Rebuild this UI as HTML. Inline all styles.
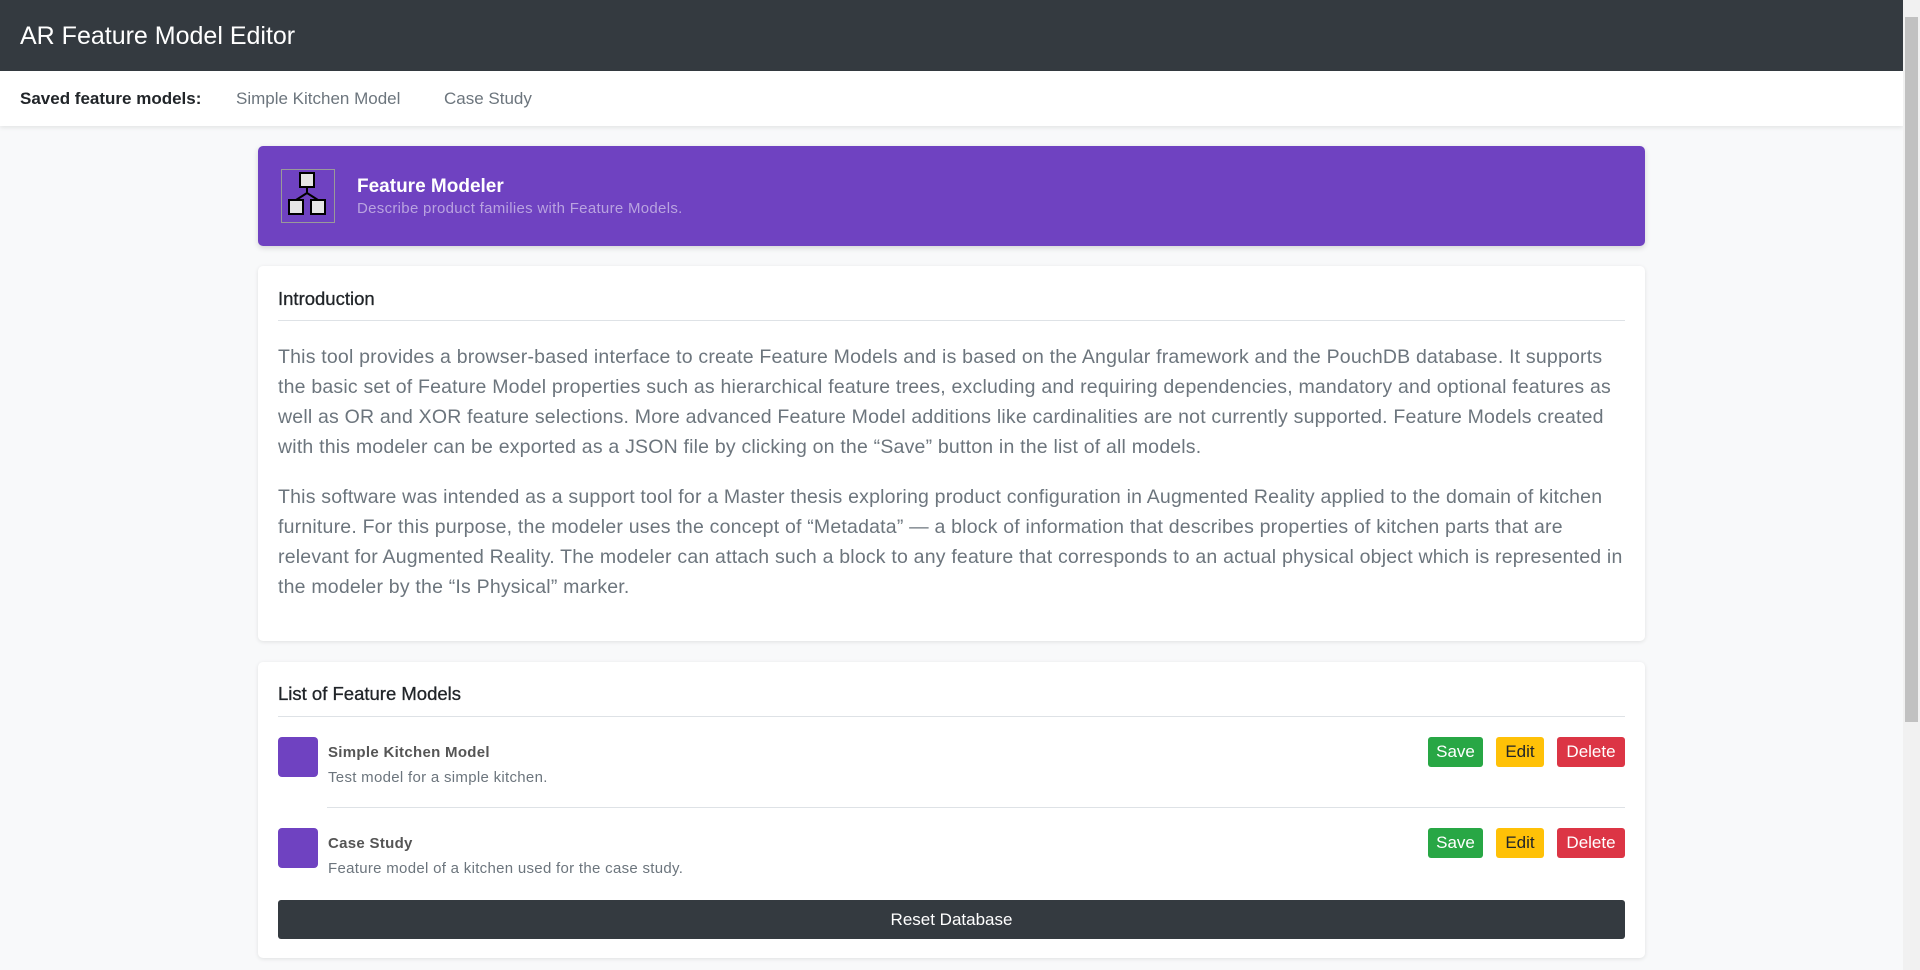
<!DOCTYPE html>
<html><head><meta charset="utf-8"><style>
*{box-sizing:border-box;margin:0;padding:0}
body{width:1920px;height:970px;overflow:hidden;background:#f8f9fa;font-family:"Liberation Sans",sans-serif;color:#212529;position:relative}
.nav{position:absolute;left:0;top:0;width:1903px;height:71px;background:#343a40;color:#fff;font-size:25px;padding:22px 0 0 20px}
.sub{position:absolute;left:0;top:71px;width:1903px;height:55px;background:#fff;box-shadow:0 2px 4px rgba(0,0,0,.08);font-size:17px;color:#6c757d}
.sub span{position:absolute;top:18px}
.sb{position:absolute;left:1903px;top:0;width:17px;height:970px;background:#f1f1f1}
.sb div{position:absolute;left:2px;top:17px;width:13px;height:705px;background:#c1c1c1}
.banner{position:absolute;left:258px;top:146px;width:1387px;height:100px;background:#6f42c1;border-radius:5px;box-shadow:0 2px 6px rgba(0,0,0,.15)}
.card{position:absolute;left:258px;width:1387px;background:#fff;border-radius:5px;box-shadow:0 1px 4px rgba(0,0,0,.1)}
h5{position:absolute;left:20px;font-size:18.5px;font-weight:normal;color:#212529;-webkit-text-stroke:0.3px #212529}
.hr{position:absolute;left:20px;right:20px;height:1px;background:#dee2e6}
p{font-size:19.5px;line-height:30px;color:#6c757d;letter-spacing:0.2px;white-space:nowrap}
.btn{position:absolute;height:30px;border-radius:3px;font-size:17px;line-height:30px;text-align:center;color:#fff}
.sq{position:absolute;left:20px;width:40px;height:40px;background:#6f42c1;border-radius:4px}
.t{position:absolute;left:70px;font-size:15px;font-weight:bold;color:#555;letter-spacing:0.3px}
.d{position:absolute;left:70px;font-size:15px;color:#6c757d;letter-spacing:0.3px}
</style></head><body>
<div class="nav">AR Feature Model Editor</div>
<div class="sub"><span style="left:20px;color:#212529;font-weight:bold">Saved feature models:</span><span style="left:236px">Simple Kitchen Model</span><span style="left:444px">Case Study</span></div>
<div class="sb"><div></div></div>
<div class="banner">
<svg style="position:absolute;left:23px;top:23px" width="54" height="54" viewBox="0 0 54 54"><rect x="0.5" y="0.5" width="53" height="53" fill="none" stroke="#999"/><rect x="19" y="4" width="14" height="14" fill="#e6e6e6" stroke="#000" stroke-width="2"/><path d="M26 18v6M26 24L15 31M26 24L37 31" stroke="#000" stroke-width="2" fill="none"/><rect x="8" y="31" width="14" height="14" fill="#e6e6e6" stroke="#000" stroke-width="2"/><rect x="30" y="31" width="14" height="14" fill="#e6e6e6" stroke="#000" stroke-width="2"/></svg>
<div style="position:absolute;left:99px;top:30px;color:#fff;font-size:19px;font-weight:bold">Feature Modeler</div>
<div style="position:absolute;left:99px;top:54px;color:#b9a3e0;font-size:15px;letter-spacing:0.3px">Describe product families with Feature Models.</div>
</div>
<div class="card" style="top:266px;height:375px">
<h5 style="top:22px">Introduction</h5><div class="hr" style="top:54px"></div>
<div style="position:absolute;left:20px;top:76px;width:1350px">
<p>This tool provides a browser-based interface to create Feature Models and is based on the Angular framework and the PouchDB database. It supports<br>the basic set of Feature Model properties such as hierarchical feature trees, excluding and requiring dependencies, mandatory and optional features as<br>well as OR and XOR feature selections. More advanced Feature Model additions like cardinalities are not currently supported. Feature Models created<br>with this modeler can be exported as a JSON file by clicking on the “Save” button in the list of all models.</p>
<p style="margin-top:20px">This software was intended as a support tool for a Master thesis exploring product configuration in Augmented Reality applied to the domain of kitchen<br>furniture. For this purpose, the modeler uses the concept of “Metadata” — a block of information that describes properties of kitchen parts that are<br>relevant for Augmented Reality. The modeler can attach such a block to any feature that corresponds to an actual physical object which is represented in<br>the modeler by the “Is Physical” marker.</p>
</div></div>
<div class="card" style="top:662px;height:296px">
<h5 style="top:21px">List of Feature Models</h5><div class="hr" style="top:54px"></div>
<div class="sq" style="top:75px"></div><div class="t" style="top:82px">Simple Kitchen Model</div><div class="d" style="top:107px">Test model for a simple kitchen.</div>
<div class="btn" style="left:1170px;top:75px;width:55px;background:#28a745">Save</div>
<div class="btn" style="left:1238px;top:75px;width:48px;background:#ffc107;color:#212529">Edit</div>
<div class="btn" style="left:1299px;top:75px;width:68px;background:#dc3545">Delete</div>
<div class="hr" style="top:145px;left:69px"></div>
<div class="sq" style="top:166px"></div><div class="t" style="top:173px">Case Study</div><div class="d" style="top:198px">Feature model of a kitchen used for the case study.</div>
<div class="btn" style="left:1170px;top:166px;width:55px;background:#28a745">Save</div>
<div class="btn" style="left:1238px;top:166px;width:48px;background:#ffc107;color:#212529">Edit</div>
<div class="btn" style="left:1299px;top:166px;width:68px;background:#dc3545">Delete</div>
<div class="btn" style="left:20px;top:238px;width:1347px;height:39px;line-height:39px;background:#343a40">Reset Database</div>
</div>
</body></html>
